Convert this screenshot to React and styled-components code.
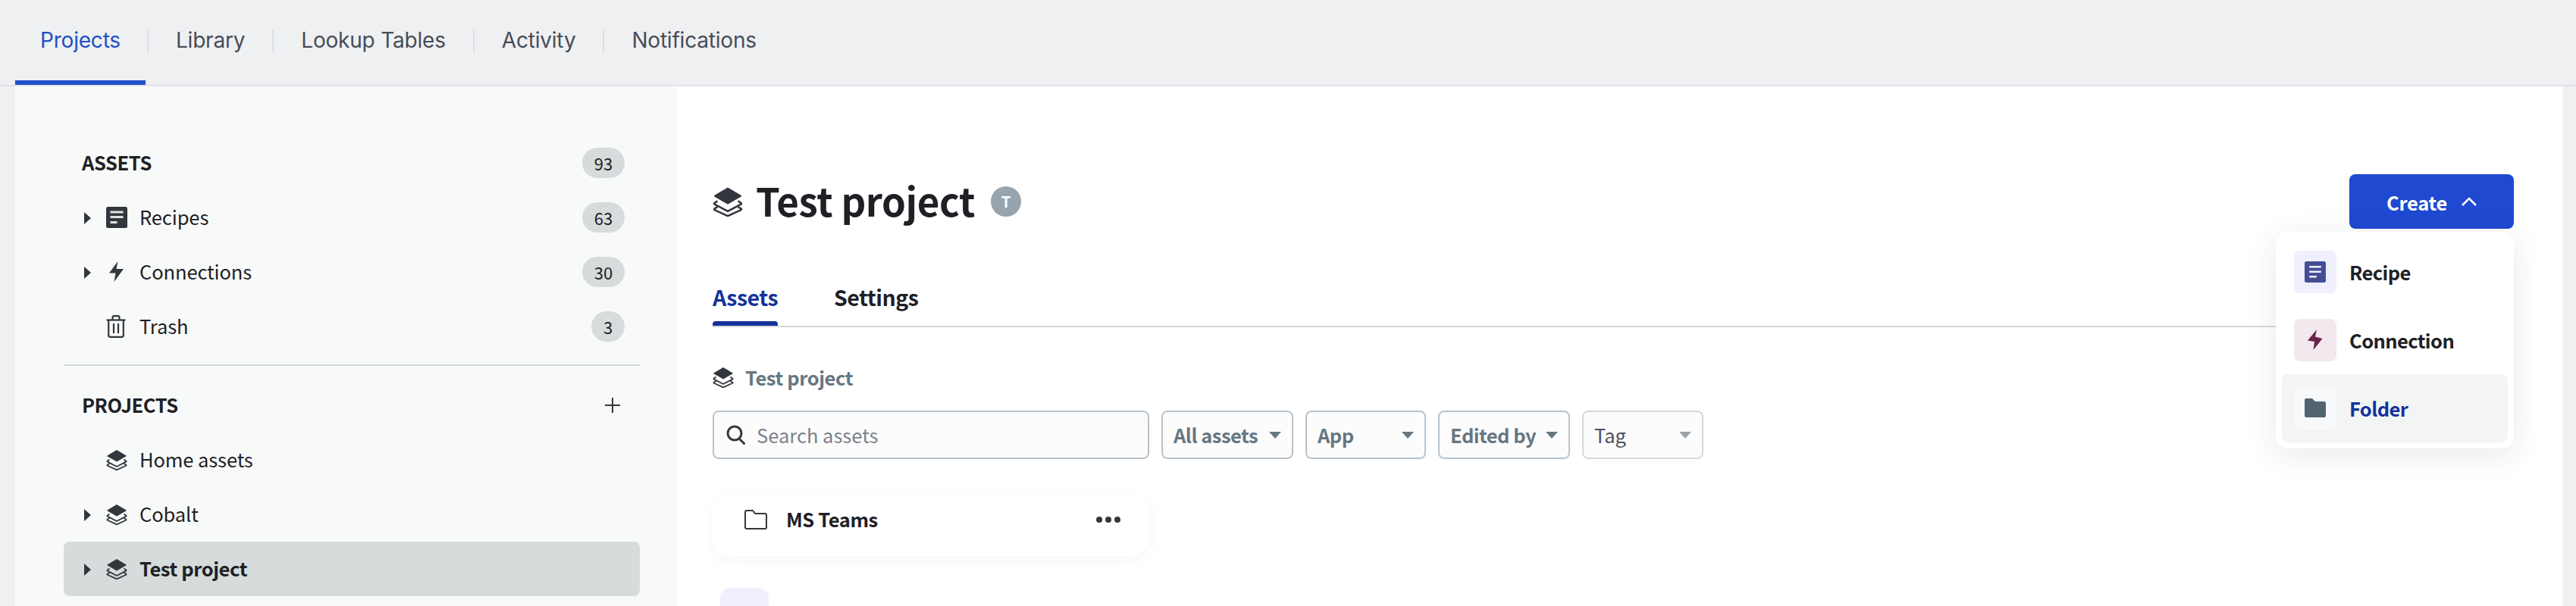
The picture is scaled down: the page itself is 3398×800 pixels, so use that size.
import React from "react";
import styled, { createGlobalStyle } from "styled-components";

const GlobalStyle = createGlobalStyle`
  html, body {
    margin: 0;
    padding: 0;
    height: 800px;
    overflow: hidden;
    background: #eff0f2;
  }
  * {
    box-sizing: border-box;
  }
`;

const BODY_FONT = `"Noto Sans CJK SC", "Noto Sans", sans-serif`;

const Page = styled.div`
  width: 3398px;
  height: 800px;
  display: flex;
  flex-direction: column;
  overflow: hidden;
  font-family: ${BODY_FONT};
`;

const TopNav = styled.nav`
  height: 114px;
  flex: none;
  display: flex;
  padding-left: 20px;
  border-bottom: 2px solid #e0e2e7;
`;

const NavItem = styled.div`
  height: 112px;
  display: flex;
  align-items: center;
  padding: 0 ${(p) => (p.$active ? "33px" : "36px")};
  font-family: Inter, sans-serif;
  font-size: 28px;
  letter-spacing: -0.2px;
  color: ${(p) => (p.$active ? "#2050c8" : "#474d57")};
  border-bottom: 6px solid ${(p) => (p.$active ? "#2050c8" : "transparent")};
`;

const NavDivider = styled.div`
  width: 2px;
  height: 30px;
  margin: 39px 0 0 ${(p) => (p.$first ? "2px" : "0")};
  background: #dcdfe3;
`;

const Content = styled.div`
  flex: 1;
  display: flex;
  margin: 0 18px 0 20px;
  min-height: 0;
`;

const Sidebar = styled.aside`
  width: 873px;
  flex: none;
  padding: 65px 49px 0 64px;
  background: #f8faf9;
`;

const Row = styled.div`
  height: 72px;
  display: flex;
  align-items: center;
  padding: 0 20px 0 27px;
  border-radius: 8px;
  font-size: 25.5px;
  line-height: 40px;
  color: #1e2025;
  background: ${(p) => (p.$selected ? "#d6dcdb" : "transparent")};
  font-weight: ${(p) => (p.$selected ? 600 : 400)};
  letter-spacing: ${(p) => (p.$selected ? "-0.4px" : "-0.1px")};
`;

const SectionRow = styled(Row)`
  padding-left: 24px;
  font-weight: 600;
  justify-content: space-between;
  letter-spacing: -0.4px;
`;

const Caret = styled.span`
  width: 0;
  height: 0;
  flex: none;
  border-style: solid;
  border-width: 8px 0 8px 9px;
  border-color: transparent transparent transparent #33363d;
  margin-top: 2px;
  visibility: ${(p) => (p.$hidden ? "hidden" : "visible")};
`;

const RowIcon = styled.span`
  width: 28px;
  height: 40px;
  flex: none;
  display: flex;
  align-items: center;
  margin: 0 16px 0 20px;
  color: #33363d;
`;

const RowLabel = styled.span`
  flex: 1;
  padding-bottom: 3px;
`;

const SectionLabel = styled.span`
  padding-bottom: 3px;
`;

const Badge = styled.span`
  height: 40px;
  min-width: ${(p) => (p.$narrow ? "44px" : "56px")};
  display: flex;
  align-items: center;
  justify-content: center;
  border-radius: 20px;
  background: #d6dcdb;
  font-size: 22px;
  font-weight: 400;
  letter-spacing: 0;
  line-height: 38px;
  color: #1e2025;
`;

const PlusWrap = styled.span`
  display: flex;
  margin-right: 6px;
`;

const SideDivider = styled.hr`
  margin: 14px 0 16px;
  border: 0;
  height: 2px;
  background: #cfd7dc;
`;

const Main = styled.main`
  flex: 1;
  min-width: 0;
  padding: 116px 64px 0 47px;
  background: #fff;
`;

const TitleRow = styled.div`
  height: 72px;
  display: flex;
  justify-content: space-between;
`;

const TitleGroup = styled.div`
  display: flex;
  align-items: flex-start;
  padding-top: 16px;
`;

const Title = styled.h1`
  margin: -2px 21px 0 17px;
  font-size: 51px;
  line-height: 40px;
  font-weight: 700;
  letter-spacing: -0.4px;
  color: #1e2025;
`;

const Avatar = styled.span`
  width: 40px;
  height: 40px;
  display: flex;
  align-items: center;
  justify-content: center;
  border-radius: 50%;
  background: #97a4ae;
  color: #fff;
  font-size: 20px;
  font-weight: 600;
  line-height: 38px;
`;

const CreateWrap = styled.div`
  position: relative;
`;

const CreateButton = styled.button`
  width: 217px;
  height: 72px;
  display: flex;
  align-items: center;
  justify-content: center;
  gap: 19px;
  padding: 0;
  border: 0;
  border-radius: 8px;
  background: #1f49d1;
  color: #fff;
  font-family: ${BODY_FONT};
  font-size: 25.5px;
  font-weight: 600;
  letter-spacing: -0.3px;
`;

const Menu = styled.div`
  position: absolute;
  top: 76px;
  right: 0;
  width: 314px;
  height: 286px;
  padding: 8px;
  border-radius: 16px;
  background: #fff;
  box-shadow: 0 8px 40px rgba(30, 40, 50, 0.1);
  z-index: 2;
`;

const MenuItem = styled.div`
  height: 90px;
  display: flex;
  align-items: center;
  gap: 17px;
  padding: 0 16px;
  border-radius: 8px;
  font-size: 25.5px;
  font-weight: 600;
  letter-spacing: -0.6px;
  line-height: 40px;
  color: ${(p) => (p.$hover ? "#14329a" : "#1e2025")};
  background: ${(p) => (p.$hover ? "#f3f5f5" : "transparent")};
`;

const MenuTile = styled.span`
  width: 56px;
  height: 56px;
  flex: none;
  display: flex;
  align-items: center;
  justify-content: center;
  border-radius: 8px;
  background: ${(p) => p.$bg};
  color: ${(p) => p.$fg};
`;

const Tabs = styled.div`
  margin-top: 64px;
  height: 66px;
  display: flex;
  gap: 74px;
  border-bottom: 2px solid #d3d7df;
`;

const Tab = styled.div`
  position: relative;
  height: 64px;
  padding-top: 6px;
  font-size: 28.5px;
  line-height: 40px;
  font-weight: 600;
  letter-spacing: -0.5px;
  color: ${(p) => (p.$active ? "#14329a" : "#1e2025")};

  &::after {
    content: "";
    display: ${(p) => (p.$active ? "block" : "none")};
    position: absolute;
    left: 0;
    right: 0;
    bottom: 0;
    height: 6px;
    border-radius: 4px 4px 0 0;
    background: #14329a;
  }
`;

const Breadcrumb = styled.div`
  margin-top: 46px;
  height: 40px;
  display: flex;
  align-items: center;
  gap: 15px;
  font-size: 25.5px;
  line-height: 38px;
  font-weight: 600;
  letter-spacing: -0.4px;
  color: #667781;
`;

const CrumbIcon = styled.span`
  display: flex;
  color: #33363d;
`;

const Toolbar = styled.div`
  margin-top: 24px;
  display: flex;
  gap: 16px;
`;

const SearchBox = styled.div`
  width: 576px;
  height: 64px;
  display: flex;
  align-items: center;
  gap: 15px;
  padding: 0 16px;
  border: 2px solid #b8c4cc;
  border-radius: 8px;
  background: #fcfcfd;
  font-size: 25.5px;
  line-height: 38px;
  color: #7a828a;
`;

const Filter = styled.div`
  width: ${(p) => p.$width}px;
  height: 64px;
  display: flex;
  align-items: center;
  justify-content: space-between;
  padding: 0 14px;
  border: 2px solid ${(p) => (p.$disabled ? "#d3dade" : "#b8c4cc")};
  border-radius: 8px;
  background: #fcfcfd;
  font-size: 25.5px;
  font-weight: ${(p) => (p.$disabled ? 400 : 600)};
  letter-spacing: ${(p) => (p.$disabled ? "0" : "-0.5px")};
  line-height: 38px;
  white-space: nowrap;
  color: ${(p) => (p.$disabled ? "#4c5259" : "#667781")};
`;

const FilterArrow = styled.span`
  width: 0;
  height: 0;
  border-style: solid;
  border-width: 9px 8px 0;
  border-color: ${(p) => (p.$disabled ? "#9ca3a8" : "#667781")} transparent transparent;
`;

const FolderCard = styled.div`
  width: 576px;
  height: 82px;
  margin-top: 46px;
  display: flex;
  align-items: flex-start;
  padding: 14px 38px 0 42px;
  border-radius: 24px;
  background: #fff;
  box-shadow: 0 6px 20px rgba(30, 40, 50, 0.04);
  font-size: 25.5px;
  font-weight: 600;
  letter-spacing: -0.4px;
  line-height: 38px;
  color: #1e2025;
`;

const FolderName = styled.span`
  flex: 1;
  margin-left: 25px;
`;

const Dots = styled.span`
  display: flex;
  align-items: center;
  height: 40px;
  gap: 4px;
`;

const Dot = styled.i`
  width: 8px;
  height: 8px;
  border-radius: 50%;
  background: #33363d;
`;

const PeekTile = styled.div`
  width: 64px;
  height: 64px;
  margin: 42px 0 0 10px;
  border-radius: 14px;
  background: #f0effd;
`;

const StackIcon = ({ size = 28 }) => (
  <svg width={size} height={size} viewBox="0 0 28 28" fill="none">
    <path d="M14 1 L26.2 8.2 Q27 8.8 26.2 9.6 L14 16.6 L1.8 9.6 Q1 8.8 1.8 8.2 Z" fill="currentColor" />
    <path d="M4.5 13.6 L1.8 15.4 Q1 16 1.8 16.6 L14 23 L26.2 16.6 Q27 16 26.2 15.4 L23.5 13.6" stroke="currentColor" strokeWidth="1.8" strokeLinejoin="round" />
    <path d="M4.5 19 L1.8 20.6 Q1 21.2 1.8 21.8 L14 27.4 L26.2 21.8 Q27 21.2 26.2 20.6 L23.5 19" stroke="currentColor" strokeWidth="1.8" strokeLinejoin="round" />
  </svg>
);

const RecipeIcon = () => (
  <svg width="28" height="28" viewBox="0 0 28 28">
    <rect width="28" height="28" rx="2.5" fill="currentColor" />
    <rect x="5.5" y="5.5" width="17" height="3" fill="#fff" opacity="0.85" />
    <rect x="5.5" y="12" width="17" height="3" fill="#fff" opacity="0.85" />
    <rect x="5.5" y="19" width="9" height="3" fill="#fff" opacity="0.85" />
  </svg>
);

const BoltIcon = () => (
  <svg width="20" height="28" viewBox="0 0 20 28" style={{ marginLeft: 4 }}>
    <path d="M11.5 0 L9.5 10 L19 10 L6.5 27 L8.5 15.5 L0 15.5 Z" fill="currentColor" />
  </svg>
);

const TrashIcon = () => (
  <svg width="26" height="30" viewBox="0 0 26 30" fill="none" stroke="currentColor" strokeWidth="2.2">
    <path d="M0.5 6.5 H25.5" />
    <path d="M8.5 6.5 V3 Q8.5 1.2 10.5 1.2 H15.5 Q17.5 1.2 17.5 3 V6.5" />
    <path d="M3.2 6.5 V26.5 Q3.2 28.8 5.5 28.8 H20.5 Q22.8 28.8 22.8 26.5 V6.5" />
    <path d="M10 11 V24 M16 11 V24" />
  </svg>
);

const PlusIcon = () => (
  <svg width="20" height="20" viewBox="0 0 20 20" stroke="#33363d" strokeWidth="2">
    <path d="M10 0 V20 M0 10 H20" />
  </svg>
);

const ChevronUp = () => (
  <svg width="20" height="12" viewBox="0 0 20 12" fill="none" stroke="#fff" strokeWidth="2.6">
    <path d="M1 11 L10 2 L19 11" />
  </svg>
);

const SearchIcon = () => (
  <svg width="25" height="26" viewBox="0 0 25 26" fill="none" stroke="#33363d" strokeWidth="3">
    <circle cx="11" cy="11" r="9" />
    <path d="M17 18 L23.5 24.5" strokeLinecap="round" />
  </svg>
);

const FolderOutline = () => (
  <svg width="30" height="26" viewBox="0 0 30 26" fill="none" stroke="#33363d" strokeWidth="2" style={{ marginTop: 7 }}>
    <path d="M1 3 Q1 1 3 1 H11 L14 5 H27 Q29 5 29 7 V23 Q29 25 27 25 H3 Q1 25 1 23 Z" strokeLinejoin="round" />
  </svg>
);

const MenuRecipeIcon = () => (
  <svg width="28" height="28" viewBox="0 0 28 28">
    <rect y="0" width="28" height="28" rx="2.5" fill="currentColor" />
    <rect x="6" y="6" width="16" height="2.6" rx="1" fill="#f0effd" />
    <rect x="6" y="12.5" width="16" height="2.6" rx="1" fill="#f0effd" />
    <rect x="6" y="19" width="10" height="2.6" rx="1" fill="#f0effd" />
  </svg>
);

const MenuBoltIcon = () => (
  <svg width="20" height="28" viewBox="0 0 20 28">
    <path d="M12 0 L10 9.5 L19.5 12 L7.5 27 L9 16 L0 14.5 Z" fill="currentColor" />
  </svg>
);

const MenuFolderIcon = () => (
  <svg width="28" height="26" viewBox="0 0 28 26">
    <path d="M0 2 Q0 0 2 0 H10 L14 4 H26 Q28 4 28 6 V23 Q28 25 26 25 H2 Q0 25 0 23 Z" fill="currentColor" />
  </svg>
);

const NAV_ITEMS = ["Library", "Lookup Tables", "Activity", "Notifications"];

const FILTERS = [
  { label: "All assets", width: 174 },
  { label: "App", width: 159 },
  { label: "Edited by", width: 174 },
  { label: "Tag", width: 160, disabled: true },
];

function SideRow({ caret, icon, label, count, narrow, selected }) {
  return (
    <Row $selected={selected}>
      <Caret $hidden={!caret} />
      <RowIcon>{icon}</RowIcon>
      <RowLabel>{label}</RowLabel>
      {count && <Badge $narrow={narrow}>{count}</Badge>}
    </Row>
  );
}

function App() {
  return (
    <Page>
      <GlobalStyle />
      <TopNav>
        <NavItem $active>Projects</NavItem>
        {NAV_ITEMS.map((item, i) => (
          <React.Fragment key={item}>
            <NavDivider $first={i === 0} />
            <NavItem>{item}</NavItem>
          </React.Fragment>
        ))}
      </TopNav>
      <Content>
        <Sidebar>
          <SectionRow>
            <SectionLabel>ASSETS</SectionLabel>
            <Badge>93</Badge>
          </SectionRow>
          <SideRow caret icon={<RecipeIcon />} label="Recipes" count="63" />
          <SideRow caret icon={<BoltIcon />} label="Connections" count="30" />
          <SideRow icon={<TrashIcon />} label="Trash" count="3" narrow />
          <SideDivider />
          <SectionRow>
            <SectionLabel>PROJECTS</SectionLabel>
            <PlusWrap>
              <PlusIcon />
            </PlusWrap>
          </SectionRow>
          <SideRow icon={<StackIcon />} label="Home assets" />
          <SideRow caret icon={<StackIcon />} label="Cobalt" />
          <SideRow caret selected icon={<StackIcon />} label="Test project" />
        </Sidebar>
        <Main>
          <TitleRow>
            <TitleGroup>
              <CrumbIcon>
                <StackIcon size={40} />
              </CrumbIcon>
              <Title>Test project</Title>
              <Avatar>T</Avatar>
            </TitleGroup>
            <CreateWrap>
              <CreateButton>
                Create
                <ChevronUp />
              </CreateButton>
              <Menu>
                <MenuItem>
                  <MenuTile $bg="#f0effd" $fg="#454e95">
                    <MenuRecipeIcon />
                  </MenuTile>
                  Recipe
                </MenuItem>
                <MenuItem>
                  <MenuTile $bg="#f3e8ee" $fg="#6b2348">
                    <MenuBoltIcon />
                  </MenuTile>
                  Connection
                </MenuItem>
                <MenuItem $hover>
                  <MenuTile $bg="#f8f9fb" $fg="#52646f">
                    <MenuFolderIcon />
                  </MenuTile>
                  Folder
                </MenuItem>
              </Menu>
            </CreateWrap>
          </TitleRow>
          <Tabs>
            <Tab $active>Assets</Tab>
            <Tab>Settings</Tab>
          </Tabs>
          <Breadcrumb>
            <CrumbIcon>
              <StackIcon />
            </CrumbIcon>
            Test project
          </Breadcrumb>
          <Toolbar>
            <SearchBox>
              <SearchIcon />
              Search assets
            </SearchBox>
            {FILTERS.map((f) => (
              <Filter key={f.label} $width={f.width} $disabled={f.disabled}>
                {f.label}
                <FilterArrow $disabled={f.disabled} />
              </Filter>
            ))}
          </Toolbar>
          <FolderCard>
            <FolderOutline />
            <FolderName>MS Teams</FolderName>
            <Dots>
              <Dot />
              <Dot />
              <Dot />
            </Dots>
          </FolderCard>
          <PeekTile />
        </Main>
      </Content>
    </Page>
  );
}

export default App;
